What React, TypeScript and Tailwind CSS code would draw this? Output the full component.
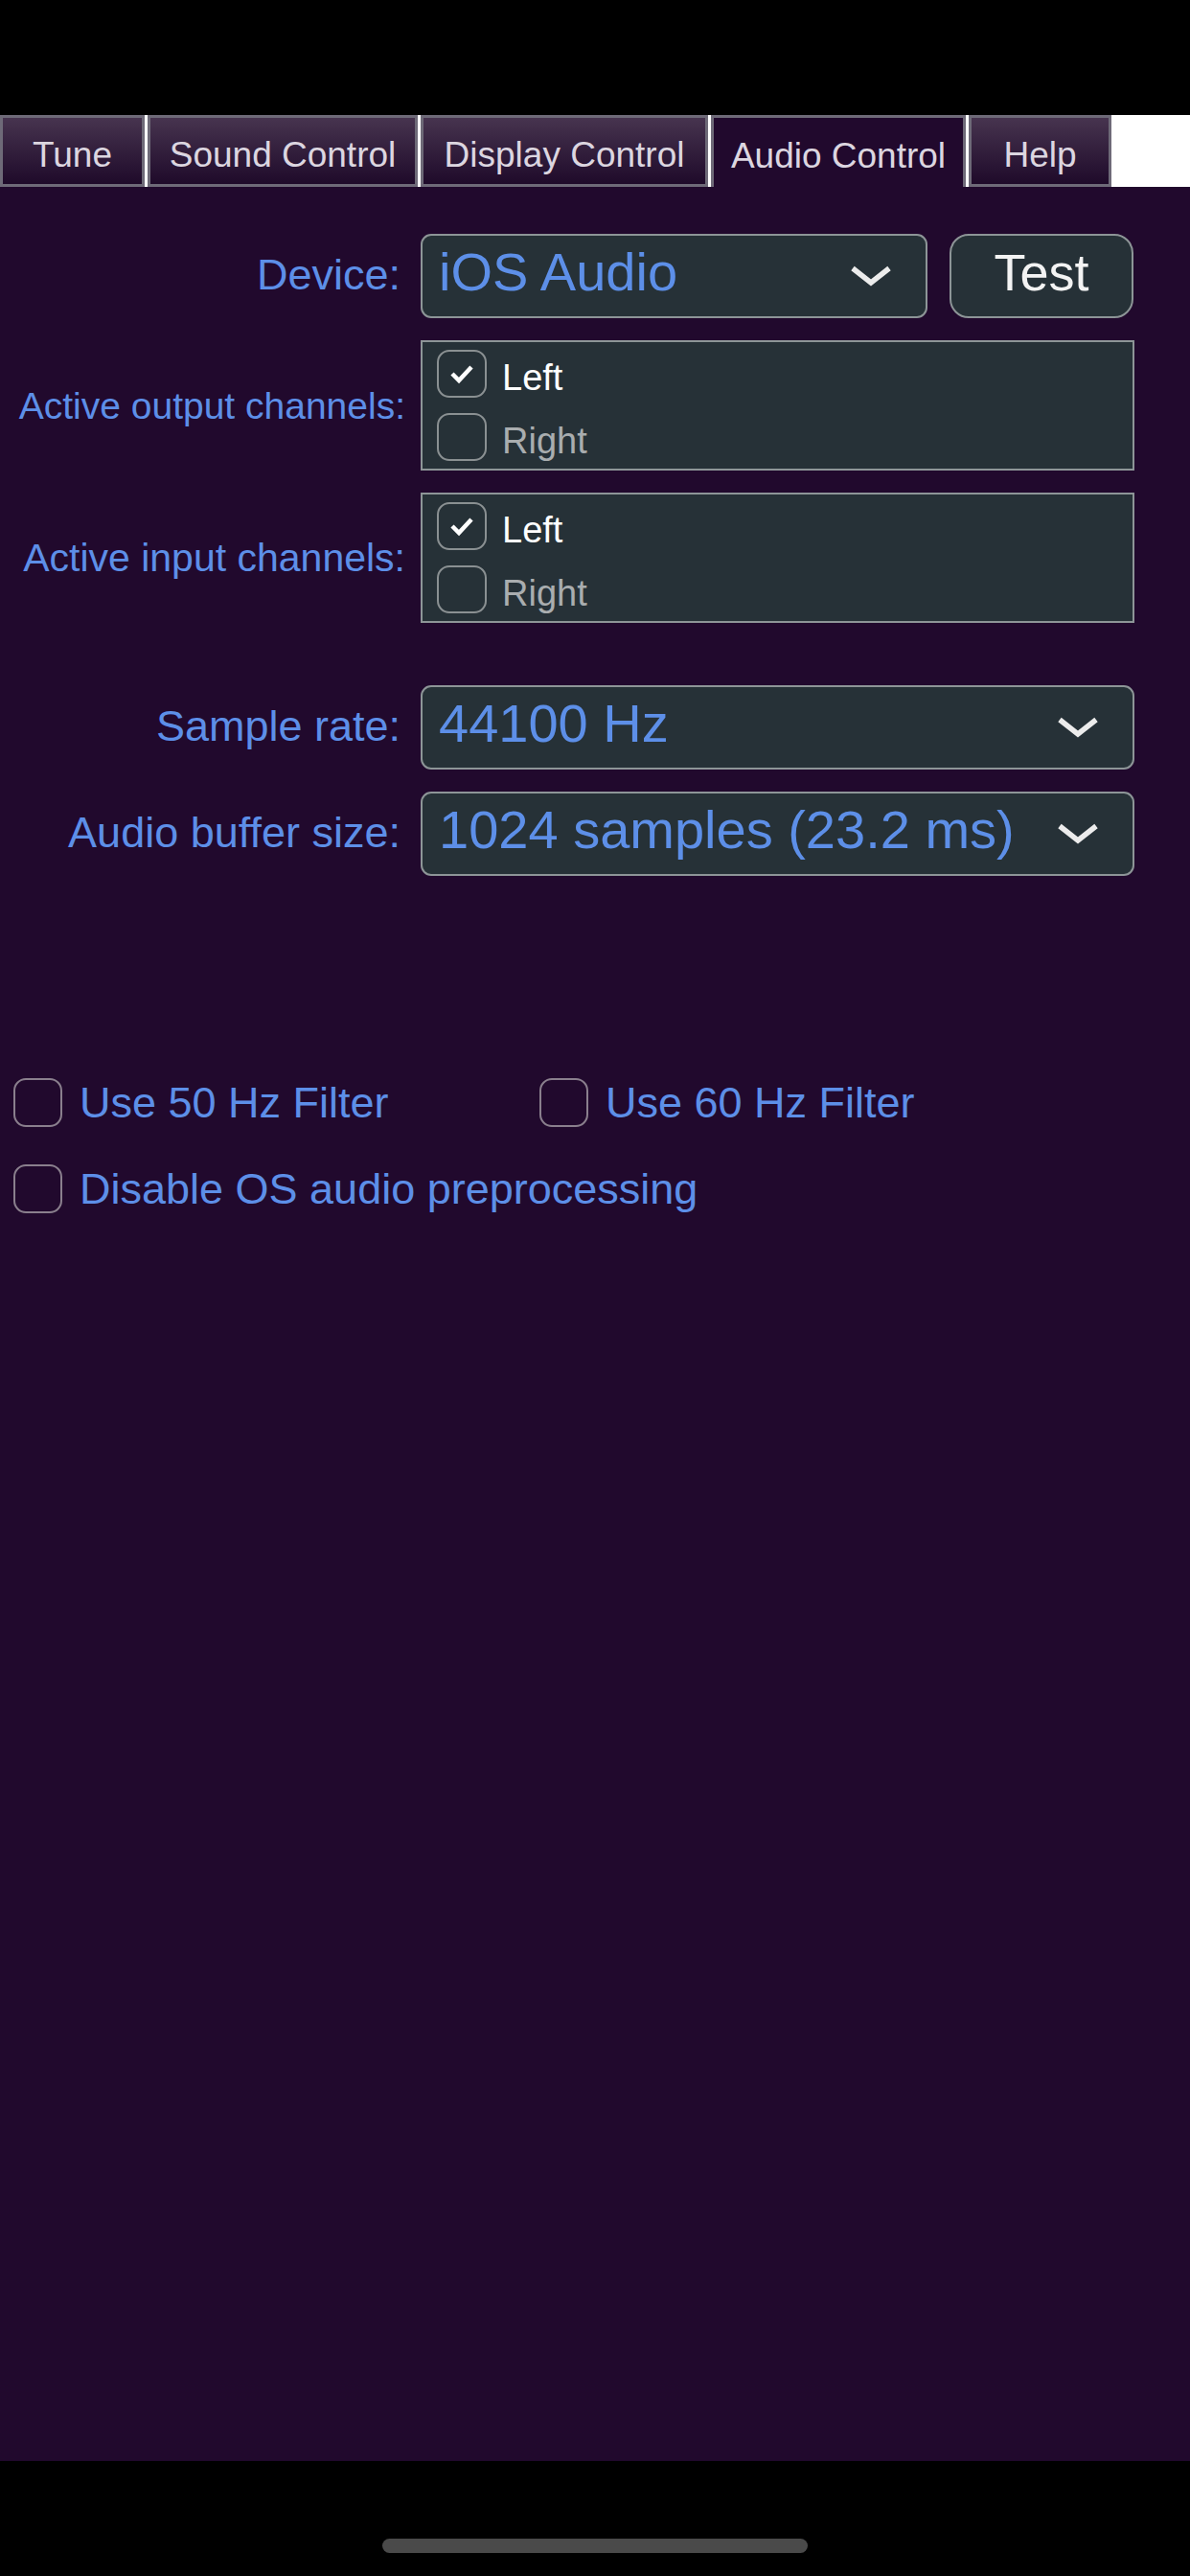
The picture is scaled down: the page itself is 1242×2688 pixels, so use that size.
import type { ReactNode } from "react";

const tabs = [
  { label: "Tune", w: "w-[151px]", active: false },
  { label: "Sound Control", w: "w-[282px]", active: false },
  { label: "Display Control", w: "w-[300px]", active: false },
  { label: "Audio Control", w: "w-[266px]", active: true },
  { label: "Help", w: "w-[149px]", active: false },
];

function Chevron() {
  return (
    <svg width="46" height="24" viewBox="0 0 46 24" className="shrink-0">
      <path d="M4 4 L23 19 L42 4" fill="none" stroke="#ececec" strokeWidth="5.5" />
    </svg>
  );
}

function Check() {
  return (
    <svg width="28" height="22" viewBox="0 0 28 22">
      <path d="M4 11 L11 18 L24 4" fill="none" stroke="#ffffff" strokeWidth="4.5" />
    </svg>
  );
}

function Select({ value, wide }: { value: string; wide?: boolean }) {
  return (
    <div
      className={`${wide ? "w-[745px]" : "w-[529px]"} h-[88px] flex items-center justify-between pl-[17px] pr-[34px] bg-[#263137] border-2 border-[#8d9597] rounded-[11px]`}
    >
      <span className="text-[56px] leading-none text-[#5d8fe8] -mt-[8px]">{value}</span>
      <Chevron />
    </div>
  );
}

// labelSize is a full class name so tailwind picks it up
function Row({ label, labelSize, children }: { label: string; labelSize: string; children: ReactNode }) {
  return (
    <div className="flex items-center">
      <div className={`w-[420px] text-right text-[#5d8fe8] leading-none ${labelSize}`}>{label}</div>
      <div className="ml-[19px] flex items-center gap-[23px]">{children}</div>
    </div>
  );
}

function Channel({ label, checked }: { label: string; checked: boolean }) {
  return (
    <div className="flex items-center h-[50px]">
      <div className="w-[52px] h-[50px] rounded-[13px] border-2 border-[#8a9092] flex items-center justify-center">
        {checked && <Check />}
      </div>
      <span
        className={`ml-[16px] mt-[8px] text-[38px] leading-none ${checked ? "text-white" : "text-[#a9adaf]"}`}
      >
        {label}
      </span>
    </div>
  );
}

function ChannelBox() {
  return (
    <div className="w-[745px] h-[136px] bg-[#263137] border-2 border-[#8d9597] pl-[15px] pt-[8px] flex flex-col gap-[16px]">
      <Channel label="Left" checked />
      <Channel label="Right" checked={false} />
    </div>
  );
}

function Option({ label }: { label: string }) {
  return (
    <div className="flex items-center">
      <div className="w-[51px] h-[51px] rounded-[13px] border-2 border-[#8a7f8d]" />
      <span className="ml-[18px] text-[45px] leading-none text-[#5d8fe8]">{label}</span>
    </div>
  );
}

export default function App() {
  return (
    <div className="w-[1242px] h-[2688px] bg-black flex flex-col font-['Liberation_Sans',Arial,sans-serif]">
      <div className="h-[120px] shrink-0" />

      {/* tab strip */}
      <div className="h-[75px] shrink-0 bg-white flex gap-[3px]">
        {tabs.map((t) => (
          <div
            key={t.label}
            className={`${t.w} h-full flex items-center justify-center pt-[8px] border-[3px] border-[#6e6a78] text-[37px] text-[#dcd6e0] ${
              t.active
                ? "bg-[#21092d] border-b-0"
                : "bg-gradient-to-b from-[#47344f] to-[#1f0a2a]"
            }`}
          >
            {t.label}
          </div>
        ))}
      </div>

      <main className="flex-1 bg-[#21092d] pt-[49px] flex flex-col">
        <div className="flex flex-col gap-[23px]">
          <Row label="Device:" labelSize="text-[45px] pr-[2px] -mt-[4px]">
            <Select value="iOS Audio" />
            <div className="w-[192px] h-[88px] flex items-center justify-center bg-[#263137] border-2 border-[#8d9597] rounded-[20px] text-[54px] leading-none text-[#f3f3f3] pb-[8px]">
              Test
            </div>
          </Row>
          <Row label="Active output channels:" labelSize="text-[39px] translate-x-[3px]">
            <ChannelBox />
          </Row>
          <Row label="Active input channels:" labelSize="text-[41px] translate-x-[3px]">
            <ChannelBox />
          </Row>
        </div>

        <div className="mt-[65px] flex flex-col gap-[23px]">
          <Row label="Sample rate:" labelSize="text-[45px] pr-[2px] -mt-[4px]">
            <Select value="44100 Hz" wide />
          </Row>
          <Row label="Audio buffer size:" labelSize="text-[45px] pr-[2px] -mt-[4px]">
            <Select value="1024 samples (23.2 ms)" wide />
          </Row>
        </div>

        <div className="mt-[211px] pl-[14px] flex flex-col gap-[39px]">
          <div className="flex">
            <div className="w-[549px]">
              <Option label="Use 50 Hz Filter" />
            </div>
            <Option label="Use 60 Hz Filter" />
          </div>
          <Option label="Disable OS audio preprocessing" />
        </div>
      </main>

      <div className="h-[120px] shrink-0 flex justify-center pt-[81px]">
        <div className="w-[444px] h-[15px] rounded-full bg-[#4a4a4a]" />
      </div>
    </div>
  );
}
